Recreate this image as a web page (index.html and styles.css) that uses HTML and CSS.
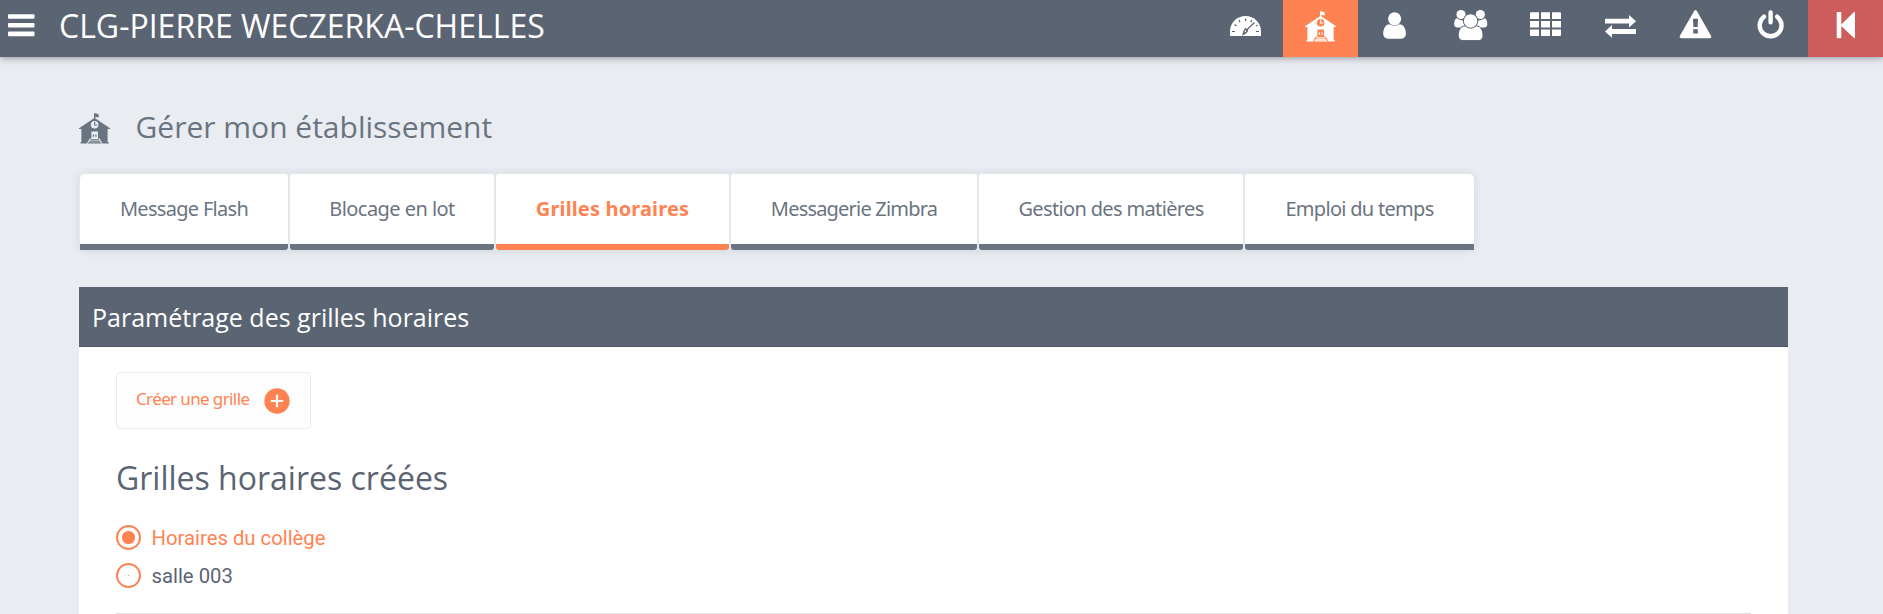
FILE: index.html
```html
<!DOCTYPE html>
<html lang="fr">
<head>
<meta charset="utf-8">
<title>Gérer mon établissement</title>
<link rel="stylesheet" href="styles.css">
</head>
<body>
<svg class="defs" aria-hidden="true">
  <symbol id="school" viewBox="0 0 31 31">
    <path fill="currentColor" fill-rule="evenodd" d="M15 0.300h1l3.600 1v3.200l-2-.5-1.400.3v1L31 15.300v.6h-2.400V29h1v1.500H23.600l-3-4.900h-1.600V18.400h-6.600v7.200h-1.600l-3 4.900H1.500V29h.9V15.900H0v-.6L15 5.300zM15.600 7.900a3.800 3.800 0 1 0 0 7.600 3.800 3.800 0 1 0 0-7.600z"/>
    <path fill="none" stroke="currentColor" stroke-width="1.100" d="M15.600 8.800v3.200h2.600"/>
    <path fill="currentColor" d="M13.800 21.500h1.200v2.200h-1.200zM16.300 21.500h1.200v2.200h-1.200zM11.700 26.200h8l.6 1H11.100zM10.600 27.700h10.200l.6 1H10zM9.500 29.200h12.400l.8 1.300H8.700z"/>
  </symbol>
</svg>
<header class="topbar">
  <svg class="burger" viewBox="0 0 27 26" fill="#fff"><rect y=".2" width="26.500" height="4.600" rx="1"/><rect y="9" width="26.500" height="4.600" rx="1"/><rect y="17.600" width="26.500" height="4.600" rx="1"/></svg>
  <div class="school-name">CLG-PIERRE WECZERKA-CHELLES</div>
  <nav class="actions">
    <a class="action"><svg viewBox="0 0 75 57"><path fill="#fff" d="M22 36v-4.500a15.500 15.500 0 0 1 31 0V36z"/><path stroke="#5b6472" stroke-width="1.200" d="M37.500 18.500v2.500M31 20l1 2.200M26.500 24.500l2 1.500M24 31.500h3M51 31.500h-3M43.800 20l-1 2.200M49.500 25l-1.500 1M46.500 22.500L38 30.500"/><path fill="none" stroke="#5b6472" stroke-width="1.400" d="M37.500 28.800l2 1.800-1.500 2-2.800 1.600 1-3.500z"/></svg></a>
    <a class="action active"><svg class="school-nav"><use href="#school"/></svg></a>
    <a class="action"><svg viewBox="-.8 0 75 57" fill="#fff"><path d="M31 24.200c-4.500 0-6.600 4.800-6.600 9.600 0 3 2 4.900 4.600 4.900h13.500c2.600 0 4.600-1.900 4.600-4.900 0-4.800-2.100-9.600-6.600-9.600a8.800 8.800 0 0 1-9.500 0z"/><circle cx="35.800" cy="18.800" r="6.600"/></svg></a>
    <a class="action"><svg viewBox="0 0 75 57"><g fill="#fff"><circle cx="28" cy="14.500" r="4.600"/><circle cx="47.300" cy="14.500" r="4.600"/><path d="M24 18.300c-2.300.5-2.800 4-2.800 6.200 0 1.700 1.300 2.900 3 2.900h8v-7.300c-2.600.7-5.800.2-8.200-1.800zM51.500 18.300c2.300.5 2.800 4 2.800 6.200 0 1.700-1.300 2.900-3 2.900h-8v-7.300c2.600.7 5.800.2 8.200-1.800z"/></g><g fill="#fff" stroke="#5b6472"><path d="M32 26c-4.700 0-6.700 4.500-6.700 9.600 0 3 2 5 4.600 5h15.500c2.600 0 4.600-2 4.600-5 0-5.100-2-9.600-6.700-9.600z"/><circle cx="37.600" cy="21" r="7.200"/></g></svg></a>
    <a class="action"><svg viewBox="0 0 75 57" fill="#fff"><path d="M23 12.300h8v6.700h-9v-5.700q0-1 1-1zM33 12.300h9v6.700h-9zM44 12.300h8q1 0 1 1v5.700h-9zM22 21h9v6.500h-9zM33 21h9v6.500h-9zM44 21h9v6.500h-9zM22 29.500h9v6.500h-8q-1 0-1-1zM33 29.500h9v6.500h-9zM44 29.500h9v5.500q0 1-1 1h-8z"/></svg></a>
    <a class="action"><svg viewBox="0 0 75 57" fill="#fff"><path d="M22.500 18.800h23.500V15l7 6.200-7 6.300v-4H22.500q-.5 0-.5-.5v-3.700q0-.5.500-.5zM52.500 29H29v-3.900l-7 6.300 7 6.400V34h23.500q.5 0 .5-.5v-4q0-.500-.5-.500z"/></svg></a>
    <a class="action"><svg viewBox="0 0 75 57"><path fill="#fff" fill-rule="evenodd" d="M36 11.200q1.500-2.600 3 0l14 24.500q1 2.500-1.800 2.500H23.700q-2.800 0-1.800-2.500zM35 18.700l.4 8.200h4.200l.4-8.200zM35.200 29.300v4.300h4.600v-4.300z"/></svg></a>
    <a class="action"><svg viewBox="0 0 75 57" fill="none" stroke="#fff" stroke-width="4.400" stroke-linecap="round"><path d="M37.600 12.500v9.700M31 16.700a10.900 10.900 0 1 0 13.200 0"/></svg></a>
    <a class="action back"><svg viewBox="0 0 75 57" fill="#fff"><path d="M29.500 12h3q.8 0 .8.800v11.700L45.700 12.300q1.300-1 1.300.6v24.300q0 1.600-1.300.6L33.300 26v11.500q0 .8-.8.800h-3q-.8 0-.8-.8V12.800q0-.8.800-.8z"/></svg></a>
  </nav>
</header>
<main class="page">
  <h1 class="title"><svg class="school-title"><use href="#school"/></svg>Gérer mon établissement</h1>
  <nav class="tabs">
    <a class="tab flash">Message Flash</a>
    <a class="tab blocage">Blocage en lot</a>
    <a class="tab grilles selected">Grilles horaires</a>
    <a class="tab zimbra">Messagerie Zimbra</a>
    <a class="tab matieres">Gestion des matières</a>
    <a class="tab emploi">Emploi du temps</a>
  </nav>
  <section class="panel">
    <h2 class="panel-head">Paramétrage des grilles horaires</h2>
    <div class="panel-body">
      <a class="create">Créer une grille<svg class="plus" viewBox="0 0 26 26"><circle cx="13" cy="13" r="12.700" fill="#ff8352"/><path stroke="#fff" stroke-width="2.200" d="M13 6.800v12.400M6.800 13h12.400"/></svg></a>
      <h3 class="list-title">Grilles horaires créées</h3>
      <div class="choice on"><svg class="radio" viewBox="0 0 25 25"><circle cx="12.500" cy="12.500" r="11.500" fill="none" stroke="#ff8352" stroke-width="2"/><circle cx="12.500" cy="12.500" r="6.600" fill="#ff8352"/></svg>Horaires du collège</div>
      <div class="choice"><svg class="radio" viewBox="0 0 25 25"><circle cx="12.500" cy="12.500" r="11.500" fill="none" stroke="#ff8352" stroke-width="2"/><circle cx="12.500" cy="12.500" r=".6" fill="#ff8352"/></svg>salle 003</div>
      <hr class="rule">
    </div>
  </section>
</main>
</body>
</html>
```
FILE: styles.css
```css
html, body { height: 100%; }
body {
  margin: 0;
  background: #e9edf2;
  color: #5b6472;
  font-family: "Open Sans", "Noto Sans", sans-serif;
}
svg { display: block; }
.defs { width: 0; height: 0; position: absolute; }

.topbar {
  display: flex;
  height: 57px;
  background: #5b6472;
  color: #fff;
  box-shadow: 0 1px 7px rgba(60, 50, 70, .5);
}
.burger { width: 27px; height: 26px; margin: 14px 24px 0 8px; }
.school-name { font-size: 32px; line-height: 51px; white-space: nowrap; }
.actions { display: flex; margin-left: auto; }
.action { width: 75px; height: 57px; }
.action svg { width: 75px; height: 57px; }
.action.active { background: #ff8352; }
.action.back { background: #cd5c5c; }
.action .school-nav { width: 31px; height: 31px; margin: 10.5px 0 0 22px; color: #fff; }

.page { padding: 0 95px 0 79px; }
.title {
  display: flex;
  margin: 0;
  padding-top: 50px;
  height: 66px;
  line-height: 40px;
  font-size: 30px;
  font-weight: 400;
  color: #6a7481;
}
.school-title { width: 31px; height: 31px; margin: 6px 25.5px 0 0; }

.tabs {
  display: flex;
  gap: 2px;
  width: 1394px;
  padding: 1px 0 0 1px;
  height: 76px;
  border-radius: 6px;
  background: #e4e8ec;
  box-shadow: 0 1px 8px rgba(60, 70, 90, .13);
  font-family: "Noto Sans", sans-serif;
}
.tab {
  box-sizing: border-box;
  height: 76px;
  border-bottom: 6px solid #6a7481;
  border-radius: 3px;
  background: #fff;
  color: #6a7481;
  font-size: 20px;
  line-height: 70px;
  letter-spacing: -.65px;
  text-align: center;
  white-space: nowrap;
}
.flash { width: 208px; border-radius: 5px 3px 3px 0; letter-spacing: -.7px; }
.blocage { width: 204px; letter-spacing: -.55px; }
.grilles { width: 233px; }
.zimbra { width: 246px; letter-spacing: -.8px; }
.matieres { width: 264px; }
.emploi { width: 229px; border-radius: 3px 5px 0 3px; letter-spacing: -.7px; }
.tab.selected { border-color: #ff8352; color: #ff8352; font-weight: 700; letter-spacing: .15px; }

.panel { margin-top: 37px; height: 327px; background: #fff; }
.panel-head {
  box-sizing: border-box;
  margin: 0;
  height: 60px;
  padding-left: 13px;
  border-bottom: 1px solid #4f5665;
  background: #5b6472;
  color: #fff;
  font-size: 25px;
  font-weight: 400;
  line-height: 60px;
}
.panel-body { padding: 25px 37px 0; }
.create {
  box-sizing: border-box;
  display: flex;
  width: 195px;
  height: 57px;
  padding-left: 19px;
  border: 1px solid #e9ebf0;
  border-radius: 4px;
  background: #fdfdfd;
  color: #ff8352;
  font: 17px/51px "Noto Sans", sans-serif;
  letter-spacing: -.62px;
  white-space: nowrap;
}
.plus { width: 26px; height: 26px; margin: 15px 20px 0 auto; flex: none; }
.list-title { margin: 28px 0 25px; font-size: 32px; font-weight: 400; line-height: 42px; }
.choice {
  display: flex;
  align-items: center;
  height: 27px;
  margin-bottom: 11px;
  font-family: Roboto, sans-serif;
  font-size: 20.3px;
}
.choice.on { color: #ff8352; }
.radio { width: 25px; height: 25px; margin-right: 10.5px; }
.rule { margin: 24px 0 0; border: 0; border-top: 1px solid #dcdee1; }
```
